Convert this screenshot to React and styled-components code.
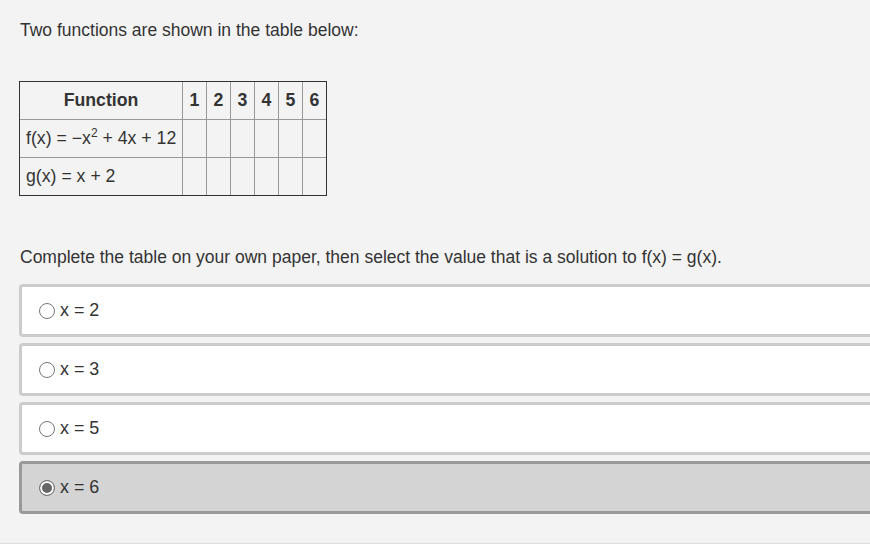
import React from 'react';
import styled, { createGlobalStyle } from 'styled-components';

const Global = createGlobalStyle`
  html, body {
    margin: 0;
    padding: 0;
    background: #ffffff;
    overflow: hidden;
  }
  body {
    font-family: "Liberation Sans", Arial, sans-serif;
    color: #333;
  }
`;

const Page = styled.div`
  width: 870px;
  height: 544px;
  background: #f3f3f3;
  border-bottom: 1px solid #dddddd;
  overflow: hidden;
  padding: 20px 0 0 20px;
  box-sizing: border-box;
`;

const Prompt = styled.p`
  margin: 0;
  font-size: 17.5px;
  line-height: 21px;
  color: #333;
`;

const Table = styled.table`
  margin: 40px 0 0 -1px;
  border-collapse: separate;
  border-spacing: 0;
  border: 1px solid #333;
  font-size: 17.7px;
  color: #333;
`;

const Th = styled.th`
  height: 37px;
  padding: 0;
  width: ${p => (p.wide ? '162px' : '23px')};
  font-weight: bold;
  text-align: center;
  border-left: ${p => (p.first ? 'none' : '1px solid #999')};
`;

const Td = styled.td`
  height: 37px;
  padding: 0 0 0 6px;
  border-top: 1px solid #999;
  border-left: ${p => (p.first ? 'none' : '1px solid #999')};
  white-space: nowrap;
  text-align: left;
`;

const Sup = styled.sup`
  font-size: 12px;
  line-height: 0;
  vertical-align: 7px;
`;

const Instruction = styled(Prompt)`
  margin-top: 51px;
`;

const Options = styled.div`
  margin: 16px 0 0 -1px;
  width: 900px;
  display: flex;
  flex-direction: column;
  gap: 6px;
`;

const Option = styled.label`
  display: flex;
  align-items: center;
  height: 53px;
  box-sizing: border-box;
  padding-left: 17px;
  border: 3px solid ${p => (p.selected ? '#999' : '#cccccc')};
  border-radius: 4px;
  background: ${p => (p.selected ? '#d4d4d4' : '#ffffff')};
  font-size: 17.9px;
  color: #333;
  cursor: pointer;
`;

const Radio = styled.span`
  width: 16px;
  height: 16px;
  box-sizing: border-box;
  border-radius: 50%;
  border: 1px solid #777;
  background: ${p => (p.checked ? '#666' : '#fff')};
  box-shadow: ${p => (p.checked ? 'inset 0 0 0 2px #fff' : 'none')};
  margin-right: 5px;
  flex-shrink: 0;
`;

const choices = ['x = 2', 'x = 3', 'x = 5', 'x = 6'];

export default function App() {
  const selected = 3;
  return (
    <>
      <Global />
      <Page>
        <Prompt>Two functions are shown in the table below:</Prompt>
        <Table>
          <thead>
            <tr>
              <Th wide first>Function</Th>
              {[1, 2, 3, 4, 5, 6].map(n => (
                <Th key={n}>{n}</Th>
              ))}
            </tr>
          </thead>
          <tbody>
            <tr>
              <Td first>
                f(x) = −x<Sup>2</Sup> + 4x + 12
              </Td>
              {[1, 2, 3, 4, 5, 6].map(n => (
                <Td key={n} />
              ))}
            </tr>
            <tr>
              <Td first>g(x) = x + 2</Td>
              {[1, 2, 3, 4, 5, 6].map(n => (
                <Td key={n} />
              ))}
            </tr>
          </tbody>
        </Table>
        <Instruction>
          Complete the table on your own paper, then select the value that is a solution to f(x) = g(x).
        </Instruction>
        <Options>
          {choices.map((c, i) => (
            <Option key={c} selected={i === selected}>
              <Radio checked={i === selected} />
              {c}
            </Option>
          ))}
        </Options>
      </Page>
    </>
  );
}
